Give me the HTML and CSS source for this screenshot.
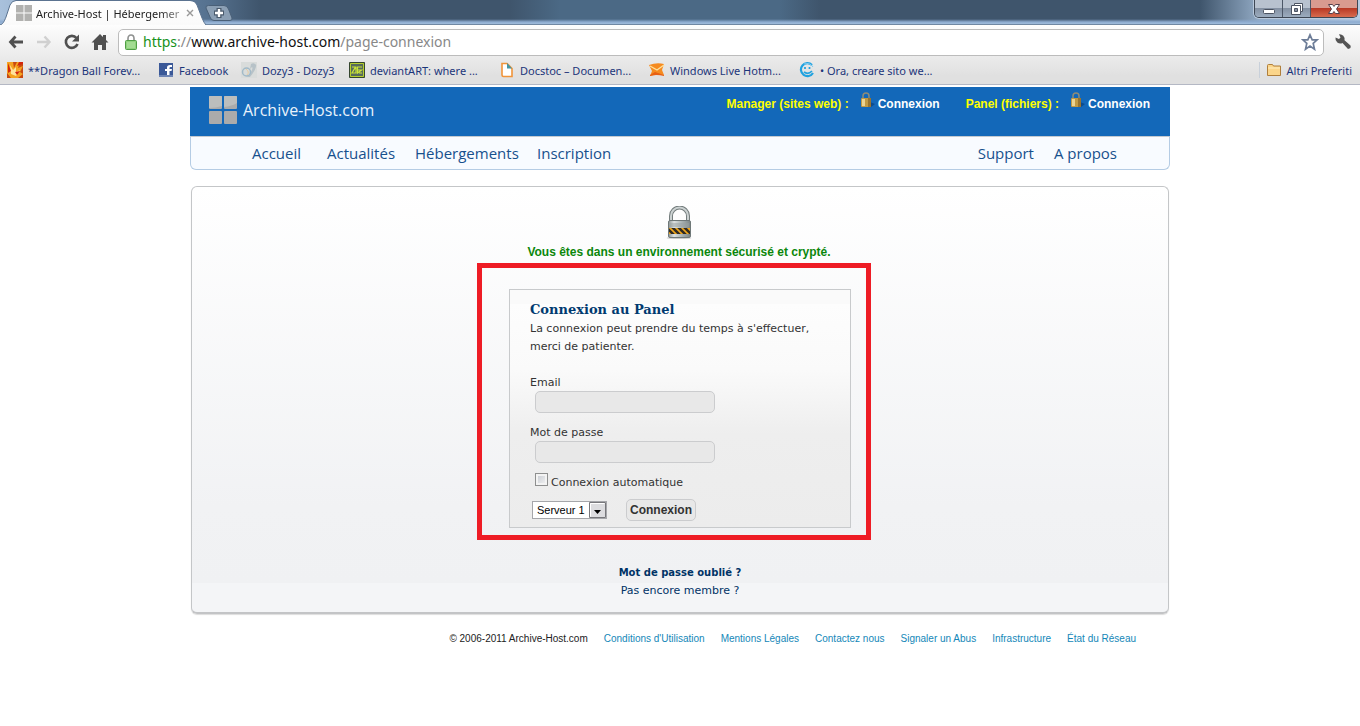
FILE: index.html
```html
<!DOCTYPE html>
<html lang="fr">
<head>
<meta charset="utf-8">
<title>Archive-Host | Hébergement</title>
<link rel="stylesheet" href="styles.css">
</head>
<body>
<header class="browser">
  <div class="titlebar">
    <div class="tab">
      <svg class="tab-shape" viewBox="0 0 206 25" width="206" height="25" aria-hidden="true">
        <defs><linearGradient id="tabFill" x1="0" y1="0" x2="0" y2="1"><stop offset="0" stop-color="#ffffff"/><stop offset="1" stop-color="#fafafa"/></linearGradient></defs>
        <path d="M0 25C3 24 4 22 6 17L10 5Q12 1 16 1H190Q195 1 197 5L202 18Q204 23 206 25Z" fill="url(#tabFill)"/>
        <path d="M0 25C3 24 4 22 6 17L10 5Q12 .5 16 .5H190Q195 .5 197 5L202 18Q204 23 206 25" fill="none" stroke="#5b7390"/>
      </svg>
      <svg class="tab-icon" viewBox="0 0 16 16" width="16" height="16" aria-hidden="true"><path d="M0 0h7.500v7.500H0zM8.500 0H16v7.500H8.500zM0 8.500h7.500V16H0zM8.500 8.500H16V16H8.500z" fill="#b1b1af"/></svg>
      <span class="tab-title">Archive-Host | Hébergemer</span>
      <button class="tab-close" type="button" aria-label="Chiudi scheda"><svg viewBox="0 0 8 8" width="8" height="8"><path d="M1 1l6 6M7 1L1 7" stroke="#999" stroke-width="1.4"/></svg></button>
    </div>
    <button class="new-tab" type="button" aria-label="Nuova scheda">
      <svg viewBox="0 0 28 16" width="28" height="16"><path d="M3.500.5H19Q22 .5 23.500 4L27 13Q27.500 15.500 25 15.500H9Q6 15.500 5 12L1 3Q.5.5 3.500.5Z" fill="#8b9fb4" stroke="#4a6078"/><path d="M14 3v10M9 8h10" stroke="#4a5a6c" stroke-width="5"/><path d="M14 4v8M10 8h8" stroke="#fff" stroke-width="2.400"/></svg>
    </button>
    <div class="window-buttons">
      <button type="button" class="win" aria-label="Riduci a icona"><svg viewBox="0 0 14 12" width="14" height="12"><rect x="1.500" y="6.500" width="11" height="4" rx="1" fill="#fff" stroke="#4b5361"/></svg></button>
      <button type="button" class="win" aria-label="Ripristina"><svg viewBox="0 0 14 12" width="14" height="12"><path d="M4.500.5h8v8h-2v3h-9v-9h3z" fill="#fff" stroke="#4b5361"/><path d="M4.500 2.500h6v6" fill="none" stroke="#4b5361"/><path d="M4.500 5.500h3v3h-3z" fill="#8790a0" stroke="#4b5361"/></svg></button>
      <button type="button" class="win win-close" aria-label="Chiudi"><svg viewBox="0 0 14 12" width="14" height="12"><path d="M1.500 1.500h4L7 3.500l1.500-2h4L9.500 6l3 4.500h-4L7 8.500l-1.500 2h-4L4.500 6z" fill="#fff" stroke="#57404a"/></svg></button>
    </div>
  </div>
  <div class="toolbar">
    <button type="button" class="tool" aria-label="Indietro"><svg viewBox="0 0 18 18" width="18" height="18"><path d="M8.500 3.500L3.500 9l5 5.500M4 9h12" fill="none" stroke="#505050" stroke-width="2.800"/></svg></button>
    <button type="button" class="tool" aria-label="Avanti"><svg viewBox="0 0 18 18" width="18" height="18"><path d="M9.500 3.500l5 5.500-5 5.500M14 9H2" fill="none" stroke="#d0d0d0" stroke-width="2.400"/></svg></button>
    <button type="button" class="tool" aria-label="Ricarica"><svg viewBox="0 0 18 18" width="18" height="18"><path d="M13.500 5A6 6 0 1 0 14.500 11" fill="none" stroke="#505050" stroke-width="2.600"/><path d="M16 1.500v7H9z" fill="#505050"/></svg></button>
    <button type="button" class="tool" aria-label="Pagina iniziale"><svg viewBox="0 0 18 18" width="18" height="18"><path d="M9 1l3 3V2h3v5l2.500 2.500H15V17h-4v-5H7v5H3V9.500H.5z" fill="#505050"/></svg></button>
    <div class="omnibox">
      <svg viewBox="0 0 12 16" width="12" height="16" aria-hidden="true"><path d="M3 7V4.500a3 3.500 0 0 1 6 0V7" fill="none" stroke="#8f9190" stroke-width="1.600"/><rect x=".5" y="6.500" width="11" height="9" rx="1" fill="#8fd27c" stroke="#4f9e45"/><path d="M2 9h8M2 11h8M2 13h8" stroke="#b7e5a8"/></svg>
      <span class="url"><span class="scheme">https</span><span class="dim">://</span>www.archive-host.com<span class="dim">/page-connexion</span></span>
      <svg viewBox="0 0 18 18" width="18" height="18" aria-hidden="true"><path d="M9 1.800l2.200 5h5l-4 3.600 1.300 5.800L9 13l-4.500 3.200 1.300-5.800-4-3.600h5z" fill="#fff" stroke="#6d7d98" stroke-width="1.700"/></svg>
    </div>
    <button type="button" class="tool wrench" aria-label="Strumenti"><svg viewBox="0 0 18 18" width="18" height="18"><path d="M1.500 4.500L5 6l1.500-1.500L5 1.200a5 5 0 0 1 5.500 6l6 5.300q1 3-2.500 3.500L8.500 10a5 5 0 0 1-7-5.500Z" fill="#555"/></svg></button>
  </div>
  <nav class="bookmarks" aria-label="Preferiti">
    <a href="#"><svg viewBox="0 0 16 16" width="16" height="16"><path d="M0 0h16v16H0z" fill="#c94a10"/><path d="M0 0h6l1 6 3-6h3l-2 6 5-2-3 6 3 2-5 4H4L0 11z" fill="#f4a321"/><path d="M3 3l3 5 3-3v5l4-2-4 6-5-2z" fill="#ffe39b"/><path d="M1 1l3 8-3 2zM8 10l5-1-3 4zM12 0l-2 4 6-2V0z" fill="#d3260c"/></svg>**Dragon Ball Forev...</a>
    <a href="#"><svg viewBox="0 0 16 16" width="16" height="16"><path d="M1 1h14v14H1z" fill="#3b5998"/><path d="M9 15V9H7V7h2V5.500Q9 3 12 3h2v2h-1.500Q11.500 5 11.500 6v1H14l-.5 2h-2v6z" fill="#fff"/><path d="M1 13h14v2H1z" fill="#6d84b4"/></svg>Facebook</a>
    <a href="#"><svg viewBox="0 0 16 16" width="16" height="16"><path d="M0 0h16v16H0z" fill="#d9dcdb"/><path d="M10 2q3-2 5 1 1 3-6 12H6q7-8 5-10l-2 2z" fill="#b7c2c8"/><circle cx="5.500" cy="10" r="4" fill="none" stroke="#a2bac8" stroke-width="1.500"/><path d="M5 7q4 3 1 6" stroke="#e7cba2" fill="none"/></svg>Dozy3 - Dozy3</a>
    <a href="#"><svg viewBox="0 0 16 16" width="16" height="16"><path d="M.5.5h15v15H.5z" fill="#576b5b" stroke="#34452e"/><path d="M1.500 1.500h13v13h-13z" fill="none" stroke="#b6cf2e"/><path d="M3 5h3.500L3 11h4V5M13 5H8.500v6l4-3H8.500M10 11h3" fill="none" stroke="#cbe43a" stroke-width="1.200"/></svg>deviantART: where ...</a>
    <a href="#"><svg viewBox="0 0 16 16" width="16" height="16"><path d="M3 1.500h5l5 5v8H4.500Q3 14.500 3 13z" fill="#fff" stroke="#f0943a" stroke-width="1.600"/><path d="M8 1v5.500h5z" fill="#4195a4"/></svg>Docstoc – Documen...</a>
    <a href="#"><svg viewBox="0 0 16 16" width="16" height="16"><path d="M0 3q8-3 15-1l-2 6 2 5q-6-1-14 1l2-5z" fill="#f58b20"/><path d="M1 4l7 4 7-5" fill="none" stroke="#ffe09b" stroke-width="1.400"/><path d="M1 13l5-3 9 3v1q-8-2-14 0z" fill="#e85f13"/></svg>Windows Live Hotm...</a>
    <a href="#"><svg viewBox="0 0 16 16" width="16" height="16"><path d="M13 3A6.500 6.500 0 1 0 14 11" fill="none" stroke="#20a2df" stroke-width="2.200"/><path d="M6 5v2M10.500 5v2M5 10q4 3 8-1" fill="none" stroke="#20a2df" stroke-width="1.700"/><path d="M5 2q6-2 9 3" fill="none" stroke="#7dcaf0"/></svg>• Ora, creare sito we...</a>
    <a href="#" class="other"><svg viewBox="0 0 16 16" width="16" height="16"><path d="M1.500 3.500q0-1 1-1h4l1 1.500h7v9.500h-13z" fill="#fbd58a" stroke="#b07f3b"/><path d="M2 6h12" stroke="#ffedbf"/></svg>Altri Preferiti</a>
  </nav>
</header>

<div class="page">
  <header class="masthead">
    <a class="brand" href="#"><svg viewBox="0 0 28 28" width="28" height="28" aria-hidden="true"><g fill="#ababab"><rect width="13" height="13" rx="1"/><rect x="15" width="13" height="13" rx="1"/><rect y="15" width="13" height="13" rx="1"/><rect x="15" y="15" width="13" height="13" rx="1"/></g><path d="M1 0h11q1 0 1 1v9q-6 2-13 2V1q0-1 1-1zM16 0h11q1 0 1 1v6q-5 3-13 4V1q0-1 1-1z" fill="#bcbebd"/></svg>Archive-Host.com</a>
    <div class="logins">
      <div class="login"><span>Manager (sites web) :</span>
        <a href="#"><svg viewBox="0 0 16 16" width="16" height="16"><path d="M11 10l5 2-4 3H7z" fill="#0d4c8c"/><path d="M4 7V4a3 3 0 0 1 6 0v4" fill="none" stroke="#8d8c78" stroke-width="1.500"/><rect x="2" y="6" width="10" height="9" rx="1" fill="#c09a45"/><path d="M3 7h3v7H3z" fill="#ead393"/><path d="M9 6h3v9H9z" fill="#967431"/></svg>Connexion</a></div>
      <div class="login"><span>Panel (fichiers) :</span>
        <a href="#"><svg viewBox="0 0 16 16" width="16" height="16"><path d="M11 10l5 2-4 3H7z" fill="#0d4c8c"/><path d="M4 7V4a3 3 0 0 1 6 0v4" fill="none" stroke="#8d8c78" stroke-width="1.500"/><rect x="2" y="6" width="10" height="9" rx="1" fill="#c09a45"/><path d="M3 7h3v7H3z" fill="#ead393"/><path d="M9 6h3v9H9z" fill="#967431"/></svg>Connexion</a></div>
    </div>
  </header>
  <nav class="menu" aria-label="Menu">
    <div class="menu-main"><a href="#">Accueil</a><a href="#">Actualités</a><a href="#">Hébergements</a><a href="#">Inscription</a></div>
    <div class="menu-side"><a href="#">Support</a><a href="#">A propos</a></div>
  </nav>

  <main class="card">
    <svg class="padlock" viewBox="0 0 26 33" width="26" height="33" aria-hidden="true">
      <defs>
        <linearGradient id="steel" x1="0" x2="1" y1="0" y2="0"><stop offset="0" stop-color="#8d9595"/><stop offset=".25" stop-color="#dce1e1"/><stop offset=".6" stop-color="#aab3b3"/><stop offset="1" stop-color="#7c8585"/></linearGradient>
        <clipPath id="band"><rect x="3" y="22" width="21" height="6"/></clipPath>
      </defs>
      <ellipse cx="13" cy="32" rx="12.500" ry="1" fill="#ccc"/>
      <path d="M5 15V10a8 8 0 0 1 17 0v5" fill="none" stroke="#747d7d" stroke-width="4"/>
      <path d="M5 15V10a8 8 0 0 1 17 0v5" fill="none" stroke="#ccd2d2" stroke-width="2"/>
      <rect x="2.500" y="14.500" width="22" height="17" rx="1.500" fill="url(#steel)" stroke="#6f7878"/>
      <path d="M4 18h19M4 20h19" stroke="#98a1a1"/>
      <g clip-path="url(#band)"><path d="M3 22h21v6H3z" fill="#f2a91c"/><path d="M0 21l8 8M6 21l8 8M12 21l8 8M18 21l8 8" stroke="#302b24" stroke-width="2.600"/></g>
    </svg>
    <p class="secure">Vous êtes dans un environnement sécurisé et crypté.</p>
    <div class="highlight">
      <form class="panel">
        <h1>Connexion au Panel</h1>
        <p>La connexion peut prendre du temps à s'effectuer, merci de patienter.</p>
        <label for="email">Email</label>
        <input class="field" id="email" type="text">
        <label for="password">Mot de passe</label>
        <input class="field" id="password" type="password">
        <div class="auto"><input id="auto" type="checkbox"><label for="auto">Connexion automatique</label></div>
        <div class="actions">
          <div class="select-box">
            <select aria-label="Serveur"><option>Serveur 1</option></select>
            <svg class="arrow" viewBox="0 0 17 16" width="17" height="16" aria-hidden="true"><path d="M.5.5h16v15H.5z" fill="#dcdcdf" stroke="#77777b"/><path d="M1.500 14.500v-13h14" fill="none" stroke="#fff"/><path d="M5 8h7l-3.500 4z" fill="#000"/></svg>
          </div>
          <button type="submit">Connexion</button>
        </div>
      </form>
    </div>
    <div class="help"><a class="forgot" href="#">Mot de passe oublié ?</a><a href="#">Pas encore membre ?</a></div>
  </main>

  <footer class="footer">
    <span>© 2006-2011 Archive-Host.com</span><a href="#">Conditions d'Utilisation</a><a href="#">Mentions Légales</a><a href="#">Contactez nous</a><a href="#">Signaler un Abus</a><a href="#">Infrastructure</a><a href="#">État du Réseau</a>
  </footer>
</div>
</body>
</html>
```
FILE: styles.css
```css
* { box-sizing: border-box; }
body { margin: 0; background: #fff; font-family: "DejaVu Sans", Verdana, sans-serif; font-size: 11px; color: #333; }
a { text-decoration: none; color: inherit; }
button { font: inherit; padding: 0; border: 0; background: none; }
svg { display: block; flex: none; }
h1, p { margin: 0; }

/* Browser frame */
.browser { font-family: "Noto Sans", "Segoe UI", sans-serif; background: linear-gradient(#fdfdfd 25px, #e0e0e0 76px); border-bottom: 1px solid #b4b8c4; }
.titlebar { display: flex; align-items: flex-start; height: 25px; padding-right: 2px;
  background: linear-gradient(transparent 19px, #8dabd0 22px, #a0bcdb 24px, #7088a3 24px),
    linear-gradient(90deg, #a9c1dc 0, #7c99b8 100px, #55718f 210px, #3f556c 260px, #3f556c 510px, #4b6985 560px, #4b6985 780px, #3f556c 820px, #3f556c 1200px, #93abc5 1260px, #b5cce4 100%); }
.tab { position: relative; display: flex; align-items: center; gap: 4px; width: 206px; height: 25px; padding: 1px 12px 0 16px; font-size: 11px; color: #222; }
.tab > * { position: relative; }
.tab > .tab-shape { position: absolute; left: 0; top: 0; }
.tab-title { flex: 1; min-width: 0; white-space: nowrap; -webkit-mask-image: linear-gradient(90deg, #000 85%, #0006); mask-image: linear-gradient(90deg, #000 85%, #0006); }
.new-tab { margin: 5px 0 0 -1px; }
.window-buttons { display: flex; margin-left: auto; border: 1px solid #3e4754; border-top: 0; border-radius: 0 0 5px 5px; overflow: hidden; box-shadow: 0 0 0 1px #b9c9dc; }
.win { display: grid; place-items: center; width: 28px; height: 17px; background: linear-gradient(#b8c2cf 50%, #8491a3 50%, #9cacbe); border-right: 1px solid #4c5767; }
.win-close { width: 46px; border: 0; background: linear-gradient(#d99b8f 50%, #b93a25 50%, #d76b4e); }
.toolbar { display: flex; align-items: center; height: 33px; padding: 1px 8px 0 7px; gap: 10px; }
.omnibox { flex: 1; display: flex; align-items: center; gap: 6px; height: 27px; margin-left: -1px; padding: 0 4px 0 6px; background: #fff; border: 1px solid #bcbcbc; border-radius: 5px; }
.url { flex: 1; font-size: 14px; line-height: 20px; color: #111; }
.scheme { color: #16911b; }
.dim { color: #888; }
.bookmarks { display: grid; grid-template-columns: 151px 83px 108px 150px 150px 150px 150px 1fr; align-items: center; height: 26px; padding: 0 8px 2px 7px; font-size: 11px; color: #1c357a; }
.bookmarks a { display: flex; align-items: center; gap: 5px; white-space: nowrap; }
.bookmarks .other { justify-self: end; padding-left: 6px; border-left: 1px solid #c8d0da; }

/* Site */
.page { max-width: 980px; margin: 0 auto; padding-top: 2px; }
.masthead { display: flex; justify-content: space-between; height: 49px; padding: 9px 20px 0 19px; background: #1368b9; }
.brand { display: flex; gap: 6px; align-items: center; height: 28px; font: 16px "Open Sans", sans-serif; color: #e9f2fb; }
.logins { display: flex; gap: 26px; font: bold 12px/16px "Liberation Sans", Arial, sans-serif; color: #ff0; }
.login { display: flex; gap: 10px; height: 16px; }
.login a { display: flex; gap: 3px; color: #fff; }
.login svg { margin-top: -4px; }
.menu { display: flex; justify-content: space-between; height: 34px; padding: 0 52px 0 61px; line-height: 33px; background: #f8fbff; border: 1px solid #b5cce4; border-top-color: #c3c9d0; border-radius: 0 0 6px 6px; font-family: "Open Sans", sans-serif; font-size: 15px; color: #17508d; }
.menu-main { display: grid; grid-template-columns: 75px 88px 122px auto; }
.menu-side { display: flex; gap: 20px; }

.card { display: flex; flex-direction: column; align-items: center; margin: 16px 1px 0; padding: 19px 0 12px; background: linear-gradient(#fff, #f1f2f4 320px, #f0f1f3 396px, #f4f5f7 396px); border: 1px solid #c4c6c8; border-bottom: 2px solid #c3c4c6; border-radius: 6px; box-shadow: 0 1px 1px #ddd; }
.padlock { margin-right: 2px; }
.secure { margin: 4px 2px 2px 0; font: bold 12px/18px "Liberation Sans", Arial, sans-serif; color: #0b870b; }
.highlight { margin-right: 12px; padding: 21px 15px 7px 27px; border: 5px solid #ee1c25; }
.panel { width: 342px; padding: 10px 20px 6px; background: linear-gradient(#fafafa 14px, #fdfdfd 14px, #fafafa 80px, #eee 144px, #ececec); border: 1px solid #c8cacc; line-height: 18px; }
.panel h1 { margin-bottom: 1px; font: bold 13px/19px "DejaVu Serif", Georgia, serif; color: #003a70; }
.panel p { margin-bottom: 18px; }
.panel label { display: block; height: 17px; }
.field { display: block; width: 180px; height: 22px; margin: 0 0 11px 5px; padding: 2px 6px; background: #e8e8e8; border: 1px solid #cbccce; border-radius: 5px; font: inherit; }
.auto { display: flex; gap: 3px; height: 18px; margin: -1px 0 8px 5px; }
.auto label { padding-top: 1px; }
.auto input { appearance: none; width: 13px; height: 13px; margin: 0; background: linear-gradient(135deg, #c4c8cf, #f5f5f5); border: 1px solid #8e8f8f; box-shadow: inset 0 0 0 2px #f3f3f3; }
.actions { display: flex; align-items: center; gap: 19px; padding-left: 2px; }
.select-box { position: relative; width: 75px; }
.select-box select { display: block; appearance: none; width: 100%; height: 18px; padding: 0 18px 0 4px; background: #fff; border: 1px solid #a5a6aa; border-radius: 0; font: 11px/16px "Liberation Sans", Arial, sans-serif; color: #000; }
.arrow { position: absolute; right: 1px; top: 1px; pointer-events: none; }
.actions button { width: 70px; height: 22px; background: #e8e8e8; border: 1px solid #cbccce; border-radius: 5px; font: bold 12px/20px "Liberation Sans", Arial, sans-serif; color: #333; }
.help { display: flex; flex-direction: column; align-items: center; margin-top: 24px; line-height: 18px; color: #003366; }
.forgot { font-size: 10px; font-weight: bold; }
.footer { display: flex; justify-content: flex-end; gap: 16px; margin: 16px 34px 0; font: 10px/18px "Liberation Sans", Arial, sans-serif; color: #222; white-space: nowrap; }
.footer a { color: #1487b8; }
```
